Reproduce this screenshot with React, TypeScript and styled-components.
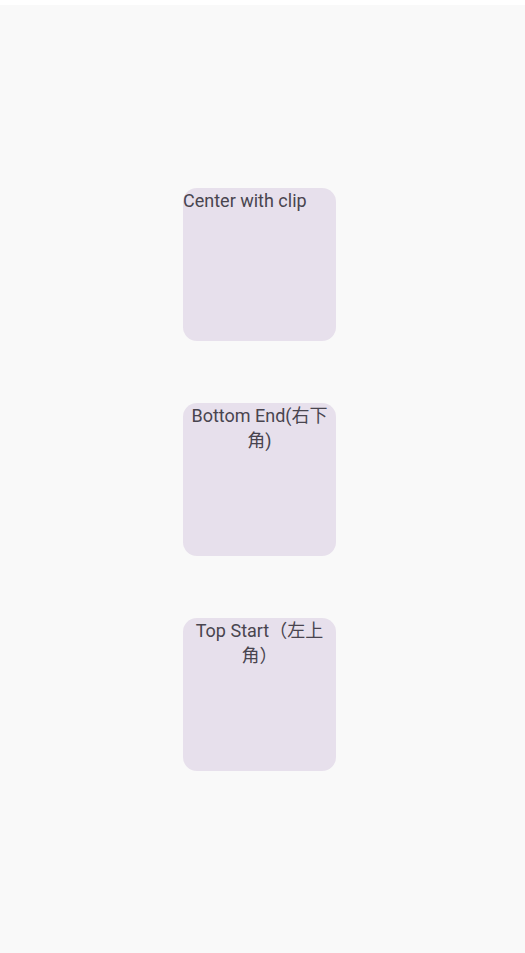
import React from "react";
import styled, { createGlobalStyle } from "styled-components";

const GlobalStyle = createGlobalStyle`
  html, body {
    margin: 0;
    padding: 0;
    background: #ffffff;
  }
  #root {
    width: 525px;
    height: 953px;
  }
`;

const Screen = styled.div`
  width: 525px;
  height: 953px;
  display: flex;
  flex-direction: column;
  background: #ffffff;
`;

const TopStrip = styled.div`
  height: 5px;
  flex: none;
  background: #ffffff;
`;

const Content = styled.main`
  flex: 1;
  background: #f9f9f9;
  display: flex;
  flex-direction: column;
  align-items: center;
  justify-content: center;
  gap: 62px;
  padding-right: 6px;
  box-sizing: border-box;
`;

const Card = styled.div<{ $align: "left" | "center" }>`
  width: 153px;
  height: 153px;
  border-radius: 14px;
  background: #e7e0ec;
  overflow: hidden;
  display: flex;
  flex-direction: column;
  align-items: ${(p) => (p.$align === "left" ? "flex-start" : "center")};
`;

const Label = styled.span<{ $align: "left" | "center" }>`
  font-family: Roboto, "Noto Sans CJK SC", sans-serif;
  font-size: 18px;
  line-height: 25px;
  color: #49454f;
  text-align: ${(p) => p.$align};
  white-space: ${(p) => (p.$align === "left" ? "nowrap" : "normal")};
`;

const items: { text: string; align: "left" | "center" }[] = [
  { text: "Center with clip", align: "left" },
  { text: "Bottom End(右下角)", align: "center" },
  { text: "Top Start（左上角）", align: "center" },
];

export default function App() {
  return (
    <>
      <GlobalStyle />
      <Screen>
        <TopStrip />
        <Content>
          {items.map((it) => (
            <Card key={it.text} $align={it.align}>
              <Label $align={it.align}>{it.text}</Label>
            </Card>
          ))}
        </Content>
      </Screen>
    </>
  );
}
